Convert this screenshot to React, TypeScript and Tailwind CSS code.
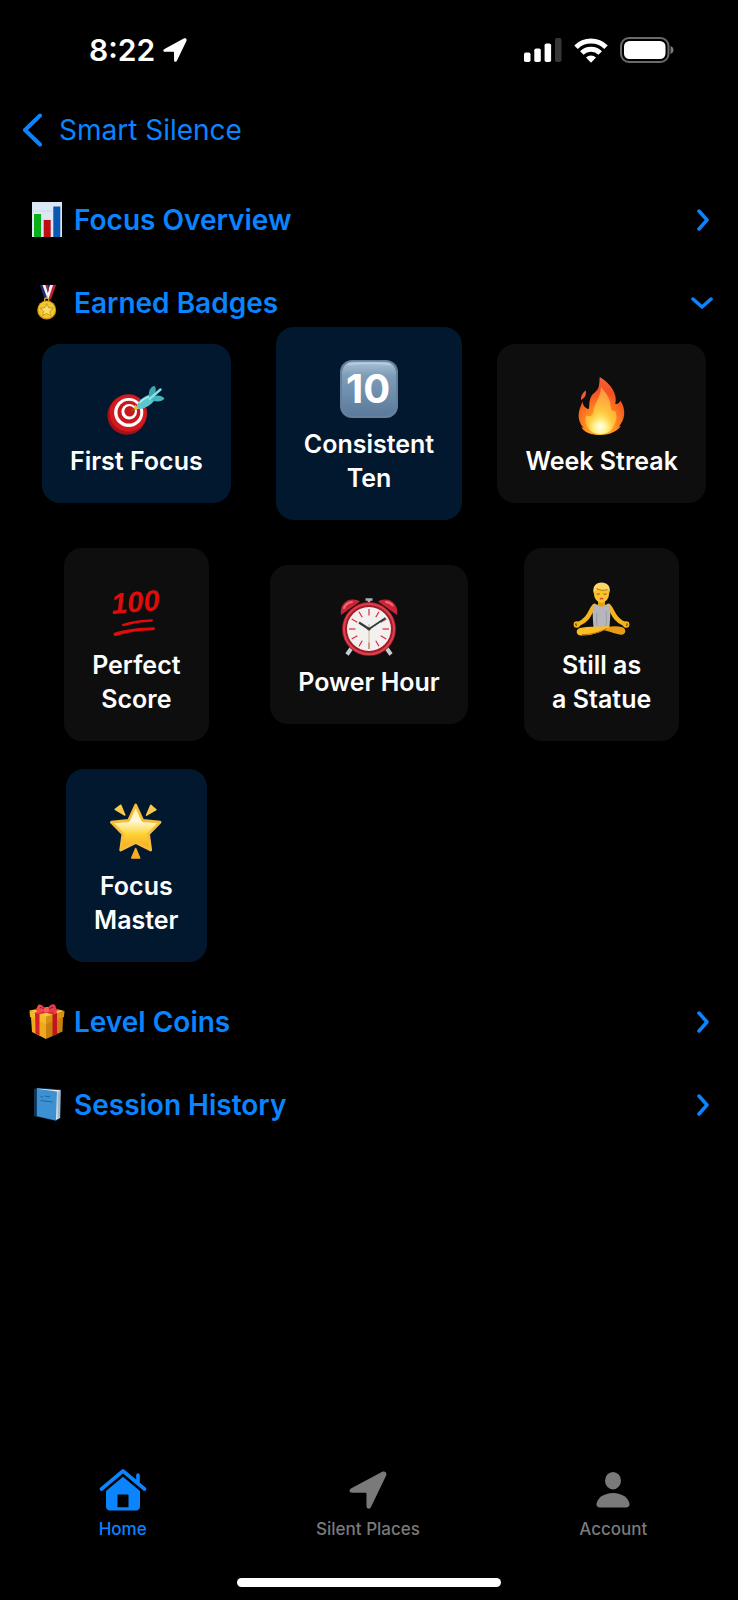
import { ReactNode, useState } from "react";

const NavArrow: React.FC<{ className: string }> = ({ className }) => (
  <svg viewBox="0 0 40 40" className={className} fill="currentColor">
    <path d="M34.500 1 2.500 18.200C-.6 20 .2 23 3.500 23H17c.9 0 1.400.5 1.400 1.400V36.500c0 3.700 3.600 4.300 5 .8L39 5C40.200 1.800 38 -.6 34.500 1Z" />
  </svg>
);

const HomeIcon = (
  <svg viewBox="0 0 48 42" className="h-[42px] w-12" fill="currentColor">
    <path
      d="M2.500 20 24 2 45.500 20M39 14V6"
      fill="none"
      stroke="currentColor"
      strokeWidth="3.600"
      strokeLinecap="round"
      strokeLinejoin="round"
    />
    <path d="M24 7.800 7 22V37.500c0 2.400 1.400 3.900 3.800 3.900h26.400c2.400 0 3.800-1.500 3.800-3.900V22ZM19 25.500h10a.5.500 0 0 1 .5.500v12.200h-11V26a.5.500 0 0 1 .5-.5Z" fillRule="evenodd" />
  </svg>
);

const AccountIcon = (
  <svg viewBox="0 0 34 36" className="h-9 w-[34px]" fill="currentColor">
    <ellipse cx="17" cy="8.700" rx="8" ry="8.700" />
    <path d="M4 35.500c-2.400 0-3.600-1.200-3.500-3.200C.9 26 8 21 17 21s16.100 5 16.500 11.300c.1 2-1.100 3.200-3.500 3.200Z" />
  </svg>
);

const chart = (
  <svg viewBox="0 0 38 35" className="h-[35px] w-[38px]">
    <rect x="4" width="30" height="35" fill="#dbe7f2" />
    <path d="M4 9h30M4 18h30M4 27h30" stroke="#c3d3e2" strokeWidth=".6" />
    <rect x="6" y="12" width="7" height="23" fill="#0aae18" />
    <rect x="15.700" y="18" width="7" height="17" fill="#bd0f12" />
    <rect x="25.300" y="4.500" width="7" height="30.500" fill="#0b57b4" />
  </svg>
);

const medal = (
  <svg viewBox="0 0 38 35" className="h-[35px] w-[38px]">
    <path d="M22.500 0H28l-5 14h-4.500Z" fill="#c41f33" />
    <path d="M21.500 0h3.500l-4.500 14h-2Z" fill="#f3f3f8" />
    <path d="M12 0h10l-2 6-1 8h-2.500Z" fill="#1c2a78" />
    <path d="M14.500 0h3l2.700 9-1 4Z" fill="#f3f3f8" />
    <path d="M17.500 0h2l1.500 4-.7 3Z" fill="#c41f33" />
    <circle cx="18.700" cy="15" r="2.200" fill="none" stroke="#dca91f" strokeWidth="1.200" />
    <circle cx="18.700" cy="25" r="9.500" fill="#cf9310" />
    <circle cx="18.700" cy="24.800" r="8.400" fill="#f3c732" />
    <path d="m18.700 18.500 1.900 4.200 4.600.5-3.400 3.100.9 4.500-4-2.300-4 2.300.9-4.500-3.400-3.100 4.600-.5Z" fill="#fbdf66" stroke="#b98312" strokeWidth=".7" />
  </svg>
);

const gift = (
  <svg viewBox="0 0 38 35" className="h-[35px] w-[38px]">
    <path d="M3 13 18 19v16L4 28Z" fill="#f0a91c" />
    <path d="M18 19 35 13 34.500 27.500 18 35Z" fill="#c87f0d" />
    <path d="M1.500 6.500 20 3l16.500 4L18 14Z" fill="#f8c843" />
    <path d="M1.500 6.500 18 12.500v7.500L2 13Z" fill="#f6b928" />
    <path d="M18 12.500 36.500 7l-.5 6L18 20Z" fill="#d9920f" />
    <path d="m7 8.500 4.500 1.700v21.300L7.500 29.500Z" fill="#d8202a" />
    <path d="M24.500 10.500 29 9v20.800l-4.500 2.200Z" fill="#c2141f" />
    <path d="m7 8.500 22-4 3 1.500-20.500 4.200ZM9 4l20 4.700-4.500 1.800L6 5.500Z" fill="#dc2c33" />
    <path d="M18 6C14 0 10.500-.8 9.500 2c-1 2-.3 5-1 7 2.500 1 7-1.500 9.500-3Z" fill="#ee4a4c" />
    <path d="M18.500 6c3-6 8-7 9-4 .7 2 .5 4.500 1.500 6.500-3 1-8-1-10.500-2.500Z" fill="#e63b40" />
    <path d="M12 3.500c2 .2 4 1.300 5.500 2.700M25.500 3.300c-2 .2-4 1.300-6 2.700" stroke="#a8141d" fill="none" />
    <rect x="15.800" y="3.500" width="5.200" height="5" rx="1.800" fill="#f45d5a" />
  </svg>
);

const book = (
  <svg viewBox="0 0 38 35" className="h-[35px] w-[38px]">
    <path d="M6 2 11 .8 33 2.500 32.500 31 28 34 6 29Z" fill="#123f66" />
    <path d="m9 1.500 23.500 1.800-.5 27.500-4 2.200Z" fill="#e8edf1" />
    <path d="m29.500 5 2.500-1v26l-2.500 1.800Z" fill="#a9b4bd" />
    <path d="M8.500 1.800 29 4.500 28 33.500 8.500 29Z" fill="#3b91d2" />
    <path d="M6.300 2.500 8.700 2v27l-2.400-.5Z" fill="#0d3355" />
    <path d="M12.500 9.500 15 10M17 9l5 1M12.500 13.500l12 1.500" stroke="#20659d" strokeWidth="1.200" />
  </svg>
);

const target = (
  <svg viewBox="0 0 58 58" className="size-[58px]">
    <ellipse cx="20" cy="38" rx="19.500" ry="19.800" fill="#a80f16" transform="rotate(40 20 38)" />
    <circle cx="21.300" cy="36" r="18.700" fill="#d21a20" />
    <circle cx="21.700" cy="35.500" r="14.600" fill="#fff" />
    <circle cx="21.900" cy="35.200" r="11.400" fill="#c8171d" />
    <circle cx="22.200" cy="34.800" r="7.800" fill="#fff" />
    <circle cx="22.600" cy="34.300" r="5.200" fill="#c8171d" />
    <path d="m24 34 7-4" stroke="#8a5a10" strokeWidth="1.500" />
    <path d="m27 32 1-4.500 5 4.500Z" fill="#f2b31c" />
    <path d="M29.500 29.500C31 23.500 38 18.500 44.500 17l4 5c-4 6-12 10.500-16.500 10Z" fill="#5cc6cf" />
    <path d="M42 20.500C41 14 43.500 9.500 47.500 9c2.200 2 1.500 7-1.500 12Z" fill="#3ba9b2" />
    <path d="M45 20c4-2.500 10-1.800 12.500 1.500-2.500 3.500-9 3.800-14 1Z" fill="#45b5be" />
    <path d="m42.500 22 11-9.500" stroke="#87e0e6" strokeWidth="2.400" strokeLinecap="round" />
    <path d="M33 25.500c2-2.500 5-4.500 8.500-5.800" stroke="#a9eef1" strokeWidth="1.500" fill="none" strokeLinecap="round" />
  </svg>
);

const keycap = (
  <svg viewBox="0 0 58 58" className="size-[58px]">
    <defs>
      <linearGradient id="key" x1="0" y1="0" x2="0" y2="1">
        <stop offset="0" stopColor="#a9c1d6" />
        <stop offset=".25" stopColor="#7f9db9" />
        <stop offset="1" stopColor="#5b7a9c" />
      </linearGradient>
    </defs>
    <rect width="58" height="58" rx="12" fill="#64809b" />
    <rect x="2" y="1.800" width="54" height="54" rx="10.500" fill="url(#key)" />
    <path d="M8 4.500C20 3 38 3 50 4.500" stroke="#b9cfe1" strokeWidth="1.500" fill="none" strokeLinecap="round" />
    <text x="28" y="43" textAnchor="middle" fontFamily="Inter, sans-serif" fontSize="40" fontWeight="700" fill="#fff">
      10
    </text>
  </svg>
);

const flame = (
  <svg viewBox="0 0 58 58" className="size-[58px]">
    <defs>
      <radialGradient id="outer" cx=".48" cy=".88" r=".85">
        <stop offset="0" stopColor="#ffd02a" />
        <stop offset=".4" stopColor="#ff8a1f" />
        <stop offset=".75" stopColor="#f4501f" />
        <stop offset="1" stopColor="#f2613c" />
      </radialGradient>
      <radialGradient id="inner" cx=".48" cy=".92" r=".85">
        <stop offset="0" stopColor="#fffde0" />
        <stop offset=".22" stopColor="#fff07a" />
        <stop offset=".5" stopColor="#ffc53c" />
        <stop offset="1" stopColor="#ff9445" />
      </radialGradient>
      <radialGradient id="glow">
        <stop offset="0" stopColor="#fffff4" />
        <stop offset="1" stopColor="#fff07a" stopOpacity="0" />
      </radialGradient>
    </defs>
    <path
      d="M26.700 0c5 3 10.300 7.500 13.300 13 2.500 4.500 3.500 9 2.300 14 2.500.2 4.500-1.200 5-3.500 3.200 4.500 4.600 10.500 3.700 15.500-.6 3.700-2.500 7.500-5 10.500l2-.4c-3.500 5-11 8.900-20.500 8.900S11 55.500 8.200 50l2.300 1C7 47 5.500 42.500 5.600 38.500c.1-5 2.100-10 4.100-14 0 3.500 2.300 7 6 7.500 1-1.500 0-5.500 1.600-10.500C19 16 24 15 25.500 10.500c1-3.300 1-7.500 1.200-10.500Z"
      fill="url(#outer)"
    />
    <path d="M12.800 13.500c.7 4-.4 7-4.800 9.500-.4-4 1.800-7.500 4.800-9.500Z" fill="#ee5a3c" />
    <path
      d="M28 10c5 6 9.500 12 9.500 19 0 4 1.500 5.500 4.500 5 2 4 2 8-.5 13C39 53.500 35 57 27.500 57S15 53 13 47c-1-3-.5-6 .5-9 3 2.500 6.500 1 7-3.500.5-8 7-13 7.500-24.500Z"
      fill="url(#inner)"
    />
    <ellipse cx="27.500" cy="49" rx="12" ry="9" fill="url(#glow)" />
  </svg>
);

const hundred = (
  <svg viewBox="0 0 58 58" className="size-[58px]">
    <text
      x="5"
      y="33"
      transform="rotate(-5 5 33)"
      fontFamily="'Liberation Sans', sans-serif"
      fontStyle="italic"
      fontSize="29"
      fontWeight="700"
      fill="#e00b0b"
    >
      100
    </text>
    <path d="M15 43.300C25 39.500 37 38.500 45.500 38.200c.8 1.500.3 2.300-1 2.500-10 .5-19 1.600-28 4.500-1.300 0-2-1-1.500-1.900Z" fill="#e00b0b" />
    <path d="M6.800 52C18 48 35 46.500 47.500 46.300c.8 1.200.5 2.500-1 2.900-14 .3-26 2-38 6-1.800-.2-2.300-2-1.700-3.200Z" fill="#e00b0b" />
  </svg>
);

const clock = (
  <svg viewBox="0 0 58 58" className="size-[58px]">
    <path d="m13 48-6 8.500M45 48l6 8.500" stroke="#c9ccd0" strokeWidth="4" />
    <path d="M25.500 1.500h7M29 2v5" stroke="#aeb2b8" strokeWidth="2.500" />
    <path d="M1 17C-.5 8 5 2 12 1.500c3.500-.2 6 .5 8 2Z" fill="#c92536" />
    <path d="M57 17C58.500 8 53 2 46 1.500c-3.500-.2-6 .5-8 2Z" fill="#c92536" />
    <path d="M4 10c1.500-3.500 4.500-5.500 8-6M46 4c3 .2 5 1.500 6.500 3.500" stroke="#ee6c78" strokeWidth="2" fill="none" strokeLinecap="round" />
    <circle cx="29" cy="31" r="27" fill="#a51a27" />
    <circle cx="29" cy="31" r="25" fill="none" stroke="#d94450" strokeWidth="2" />
    <circle cx="29" cy="31" r="22" fill="#f2f1ef" />
    <g stroke="#d9283c" strokeWidth="1.200">
      {[0, 30, 60, 90, 120, 150, 180, 210, 240, 270, 300, 330].map((deg) => (
        <path key={deg} d="M29 11v6.500" transform={`rotate(${deg} 29 31)`} />
      ))}
    </g>
    <path d="M29 26v25" stroke="#c8b78c" strokeWidth="1" />
    <path d="m29 31-10-6.500" stroke="#33383d" strokeWidth="2.200" />
    <path d="m29 31 16.500-11" stroke="#33383d" strokeWidth="1.800" />
    <circle cx="29" cy="31" r="1.600" fill="#33383d" />
  </svg>
);

const lotus = (
  <svg viewBox="0 0 58 58" className="size-[58px]">
    <path d="M21.500 25C16.500 30 17 38 5.500 43M35.500 25c5 5 4.500 13 16 18" stroke="#f7b51c" strokeWidth="4.600" fill="none" strokeLinecap="round" />
    <circle cx="3.800" cy="43.500" r="2.300" fill="none" stroke="#f7b51c" strokeWidth="1.800" />
    <circle cx="53.200" cy="43.500" r="2.300" fill="none" stroke="#f7b51c" strokeWidth="1.800" />
    <path d="M25 18h7v8h-7Z" fill="#e89e12" />
    <path d="M20.500 23.500h4c1 3 7 3 8 0h4c1.500 7 .5 14 0 23h-16c-.5-9-1.500-16 0-23Z" fill="#b5b7bd" />
    <path d="M24 32c-.5 5-.5 9 0 13M33 30c.8 5 .5 10 0 15" stroke="#9a9ca3" fill="none" />
    <path d="M21 45c5 2.500 18 7 27 8.700 5 .3 6-5.700 1.500-7.500C42 44 34 45.500 28 48Z" fill="#e99d14" />
    <path d="M36 45c-7 1-21 0-29 2-5 1.500-4 7.200 1 7.500 11 .4 20-3.500 28-8Z" fill="#fbbd25" />
    <path d="M9 53.500C18 54 27 51 34 47.500" stroke="#b97008" fill="none" />
    <ellipse cx="28.500" cy="12.500" rx="7.600" ry="9.200" fill="#fcc22d" />
    <path d="M20.500 12C19.500 5 23 1.500 28.500 1.500S38 5 36.500 12c-1-1.500-1.500-3-2-4-4.500 1.500-8 .5-10-1-1 2-2.500 3-4 5Z" fill="#fbd668" />
    <path d="M23.500 7.500c3 2 7 2.500 11 1" stroke="#b97a12" fill="none" />
    <path d="M23.500 12.700c1 .8 2.200.8 3.200 0M30.500 12.700c1 .8 2.200.8 3.200 0" stroke="#8a5208" fill="none" />
    <path d="M26.800 18c1.200-.7 2.200-.7 3.400 0" stroke="#c2482a" strokeWidth="1.400" fill="none" />
  </svg>
);

const star = (
  <svg viewBox="0 0 58 58" className="size-[58px]">
    <defs>
      <linearGradient id="gold" x1="0" y1="0" x2="0" y2="1">
        <stop offset="0" stopColor="#fff0a8" />
        <stop offset=".35" stopColor="#fff9d8" />
        <stop offset=".65" stopColor="#fed336" />
        <stop offset="1" stopColor="#f5a21b" />
      </linearGradient>
    </defs>
    <path
      d="M28.700 3 35.800 18.500 53 20.200 41.500 32 43.700 48 28.700 40.500 13.700 48 15.900 32 4.400 20.200 21.600 18.500Z"
      fill="url(#gold)"
      stroke="#f6bd3a"
      strokeWidth="2.800"
      strokeLinejoin="round"
    />
    <g fill="#f9ca4b" stroke="#f9ca4b" strokeWidth="1.500" strokeLinejoin="round">
      <path d="m8.200 7.300 5.600-4.100L17.800 13ZM43.800 3.200l5.200 4.500-9.500 5.500Z" />
      <path d="m28.700 46.500-4 9.500h8Z" fill="#f7ac25" stroke="#f7ac25" />
    </g>
  </svg>
);

const badges: { name: string; icon: ReactNode; earned: boolean }[] = [
  { name: "First Focus", icon: target, earned: true },
  { name: "Consistent\nTen", icon: keycap, earned: true },
  { name: "Week Streak", icon: flame, earned: false },
  { name: "Perfect\nScore", icon: hundred, earned: false },
  { name: "Power Hour", icon: clock, earned: false },
  { name: "Still as\na Statue", icon: lotus, earned: false },
  { name: "Focus\nMaster", icon: star, earned: true },
];

const sections = [
  { title: "Focus Overview", icon: chart },
  { title: "Earned Badges", icon: medal },
  { title: "Level Coins", icon: gift },
  { title: "Session History", icon: book },
];

const tabs = [
  { name: "Home", icon: HomeIcon },
  { name: "Silent Places", icon: <NavArrow className="size-[38px]" /> },
  { name: "Account", icon: AccountIcon },
];

const StatusBar = () => (
  <div className="flex h-[100px] items-center justify-between pr-16 pl-[89px] text-white">
    <div className="flex items-center gap-2">
      <span className="text-[30px] font-semibold">8:22</span>
      <NavArrow className="size-6" />
    </div>
    <div className="flex items-center gap-3">
      <svg viewBox="0 0 38 24" className="h-6 w-[38px]" fill="currentColor">
        <rect y="14.500" width="6.500" height="9.500" rx="1.800" />
        <rect x="10.300" y="10.500" width="6.500" height="13.500" rx="1.800" />
        <rect x="20.600" y="5.500" width="6.500" height="18.500" rx="1.800" />
        <rect x="31" y="0" width="6.500" height="24" rx="1.800" fill="#373737" />
      </svg>
      <svg viewBox="0 0 34 25" className="h-[25px] w-[34px]">
        <path d="M2 9.200a21.500 21.500 0 0 1 30 0M7.800 15a13.300 13.300 0 0 1 18.400 0" fill="none" stroke="currentColor" strokeWidth="5" />
        <path d="M17 24.800 12 19.600a7.300 7.300 0 0 1 10 0Z" fill="currentColor" />
      </svg>
      <svg viewBox="0 0 54 26" className="h-[26px] w-[54px]">
        <rect x="1" y="1" width="47.500" height="24" rx="8" fill="none" stroke="#6a6a6a" strokeWidth="2" />
        <rect x="4" y="4" width="41.500" height="18" rx="5.500" fill="currentColor" />
        <path d="M50.500 9c4 1.200 4 6.800 0 8Z" fill="#7a7a7a" />
      </svg>
    </div>
  </div>
);

const BadgeGrid = () => (
  <div className="mt-[7px] -mb-[6px] grid grid-cols-3 items-center justify-items-center gap-y-7 px-5">
    {badges.map((badge) => (
      <div
        key={badge.name}
        className={`${
          badge.earned ? "bg-[#02182f]" : "bg-[#0e0e0e]"
        } flex flex-col items-center rounded-[18px] px-7 pt-[33px] pb-[25px]`}
      >
        {badge.icon}
        <p className="mt-[9px] text-center text-[25px] leading-[34px] font-semibold whitespace-pre text-white">
          {badge.name}
        </p>
      </div>
    ))}
  </div>
);

const App = () => {
  const [open, setOpen] = useState("Earned Badges");
  const [tab, setTab] = useState("Home");

  return (
    <div className="flex min-h-screen flex-col bg-black font-['Inter',sans-serif] text-[#0a84ff]">
      <StatusBar />
      <header className="flex h-15 items-center px-[22px]">
        <button className="flex cursor-pointer items-center gap-[17px] text-[28px]">
          <svg viewBox="0 0 20 34" className="h-[34px] w-5">
            <path d="M18 2.500 3 17l15 14.500" fill="none" stroke="currentColor" strokeWidth="4" strokeLinecap="round" strokeLinejoin="round" />
          </svg>
          Smart Silence
        </button>
      </header>

      <main className="flex flex-col gap-12 pt-[42px]">
        {sections.map((section) => {
          const expanded = open === section.title;
          return (
            <section key={section.title}>
              <button
                onClick={(): void => setOpen(expanded ? "" : section.title)}
                aria-expanded={expanded}
                className="flex h-[35px] w-full cursor-pointer items-center pr-[29px] pl-7"
              >
                {section.icon}
                <span className="ml-2 text-[28px] font-semibold">
                  {section.title}
                </span>
                <svg
                  viewBox="0 0 12 22"
                  className={`${
                    expanded ? "mr-px rotate-90" : ""
                  } ml-auto h-[22px] w-3`}
                >
                  <path d="m2 2 8 9-8 9" fill="none" stroke="currentColor" strokeWidth="3.500" strokeLinecap="round" strokeLinejoin="round" />
                </svg>
              </button>
              {expanded && section.title === "Earned Badges" && <BadgeGrid />}
            </section>
          );
        })}
      </main>

      <nav className="mt-auto flex pt-12 pr-0.5">
        {tabs.map(({ name, icon }) => (
          <button
            key={name}
            onClick={(): void => setTab(name)}
            className={`${
              tab === name ? "text-[#0a84ff]" : "text-[#7a7a7a]"
            } flex flex-1 cursor-pointer flex-col items-center`}
          >
            <span className="flex h-[42px] items-center">{icon}</span>
            <span className="mt-[6px] text-[17px] leading-6 font-medium">
              {name}
            </span>
          </button>
        ))}
      </nav>
      <div className="mx-auto mt-[37px] mb-[13px] h-[9px] w-[264px] rounded-full bg-white" />
    </div>
  );
};

export default App;
